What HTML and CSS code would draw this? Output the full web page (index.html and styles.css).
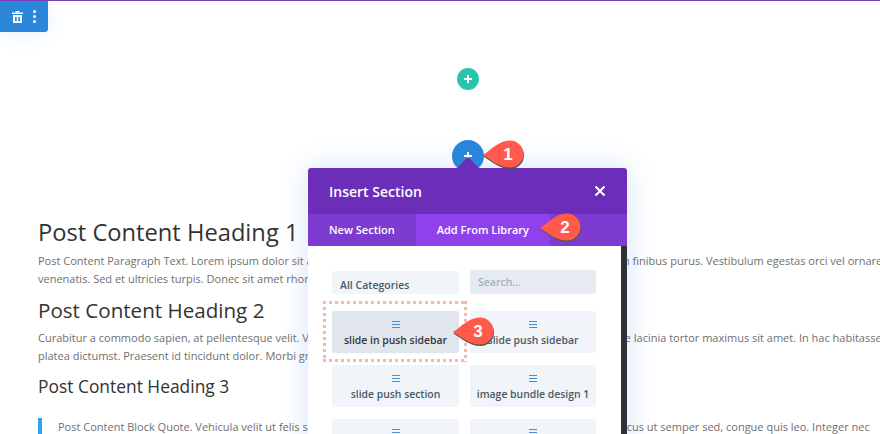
FILE: index.html
```html
<!DOCTYPE html>
<html lang="en">
<head>
    <meta charset="UTF-8">
    <meta name="viewport" content="width=device-width, initial-scale=1.0">
    <title>Insert Section</title>
    <link rel="stylesheet" href="styles.css">
</head>
<body>
    <div class="page">
        <div class="toolbar">
            <svg class="toolbar-icon" width="11" height="12" viewBox="0 0 11 12">
                <rect x="3.5" y="0" width="4" height="1.5" fill="#fff"/>
                <rect x="0" y="1.5" width="11" height="1.5" fill="#fff"/>
                <path d="M1 4h9v8H1z M3 6v4h1.75V6z M6.25 6v4H8V6z" fill="#fff" fill-rule="evenodd"/>
            </svg>
            <span class="kebab"><i></i><i></i><i></i></span>
        </div>

        <div class="add-row add-row-green">
            <span class="add-btn add-btn-green">
                <svg width="10" height="10" viewBox="0 0 10 10"><path d="M5 1v8M1 5h8" stroke="#fff" stroke-width="2"/></svg>
            </span>
        </div>
        <div class="add-row add-row-blue">
            <span class="add-btn add-btn-blue">
                <svg width="10" height="10" viewBox="0 0 10 10"><path d="M5 1v8M1 5h8" stroke="#fff" stroke-width="2"/></svg>
            </span>
        </div>

        <div class="content">
            <h1>Post Content Heading 1</h1>
            <p>Post Content Paragraph Text. Lorem ipsum dolor sit amet, consectetur adipiscing elit. Sed at nunc sed mauris quam finibus purus. Vestibulum egestas orci vel ornare<br>venenatis. Sed et ultricies turpis. Donec sit amet rhoncus erat.</p>
            <h2>Post Content Heading 2</h2>
            <p>Curabitur a commodo sapien, at pellentesque velit. Vivamus vitae lectus sed ipsum nec dapibus nulla sed eros, vitae lacinia tortor maximus sit amet. In hac habitasse<br>platea dictumst. Praesent id tincidunt dolor. Morbi gravida.</p>
            <h3>Post Content Heading 3</h3>
            <blockquote>Post Content Block Quote. Vehicula velit ut felis semper, pretium lacus nec ante rhoncus, vitae dictum ornare lacus ut semper sed, congue quis leo. Integer nec</blockquote>
        </div>

        <div class="modal">
            <span class="modal-arrow"></span>
            <div class="modal-head">
                <span class="modal-title">Insert Section</span>
                <svg width="12" height="12" viewBox="0 0 12 12"><path d="M1.5 1.5l9 9M10.5 1.5l-9 9" stroke="#fff" stroke-width="2"/></svg>
            </div>
            <div class="tabs">
                <span class="tab">New Section</span>
                <span class="tab tab-active">Add From Library</span>
            </div>
            <div class="modal-body">
                <div class="filters">
                    <div class="select">All Categories</div>
                    <div class="search">Search...</div>
                </div>
                <div class="layouts">
                    <div class="layout layout-selected"><span class="menu-icon"></span>slide in push sidebar</div>
                    <div class="layout"><span class="menu-icon"></span>slide push sidebar</div>
                    <div class="layout"><span class="menu-icon"></span>slide push section</div>
                    <div class="layout"><span class="menu-icon"></span>image bundle design 1</div>
                    <div class="layout"><span class="menu-icon"></span></div>
                    <div class="layout"><span class="menu-icon"></span></div>
                </div>
            </div>
        </div>

        <div class="dotted"></div>

        <div class="callout callout-1">
            <svg width="46" height="34" viewBox="0 0 46 34">
                <path d="M0 16C8 11 15 2 27 1.5A13.5 13.5 0 1 1 27 28.5C16 28.5 8 21 0 16z" fill="#5c5550" transform="translate(0.5 1.5)"/>
                <path d="M0 16C8 11 15 2 27 1.5A13.5 13.5 0 1 1 27 28.5C16 28.5 8 21 0 16z" fill="#ff5a4b"/>
            </svg>
            <span>1</span>
        </div>
        <div class="callout callout-2">
            <svg width="46" height="34" viewBox="0 0 46 34">
                <path d="M0 16C8 11 15 2 27 1.5A13.5 13.5 0 1 1 27 28.5C16 28.5 8 21 0 16z" fill="#5c5550" transform="translate(0.5 1.5)"/>
                <path d="M0 16C8 11 15 2 27 1.5A13.5 13.5 0 1 1 27 28.5C16 28.5 8 21 0 16z" fill="#ff5a4b"/>
            </svg>
            <span>2</span>
        </div>
        <div class="callout callout-3">
            <svg width="46" height="34" viewBox="0 0 46 34">
                <path d="M0 16C8 11 15 2 27 1.5A13.5 13.5 0 1 1 27 28.5C16 28.5 8 21 0 16z" fill="#5c5550" transform="translate(0.5 1.5)"/>
                <path d="M0 16C8 11 15 2 27 1.5A13.5 13.5 0 1 1 27 28.5C16 28.5 8 21 0 16z" fill="#ff5a4b"/>
            </svg>
            <span>3</span>
        </div>
    </div>
</body>
</html>
```

FILE: styles.css
```css
html, body {
    margin: 0;
    padding: 0;
}

body {
    font-family: "Open Sans", sans-serif;
    background-color: #fff;
    color: #6f6f6f;
}

.page {
    position: relative;
    width: 880px;
    height: 434px;
    overflow: hidden;
    border-top: 1px solid #7b3fb8;
    box-sizing: border-box;
}

.toolbar {
    display: flex;
    align-items: center;
    gap: 10px;
    width: 48px;
    height: 31px;
    padding-left: 12px;
    box-sizing: border-box;
    background-color: #2b87da;
    border-radius: 0 0 3px 0;
    box-shadow: 0 2px 18px rgba(43, 135, 218, 0.12);
}

.kebab {
    display: flex;
    flex-direction: column;
    gap: 2px;
}

.kebab i {
    display: block;
    width: 3px;
    height: 3px;
    border-radius: 50%;
    background-color: #fff;
}

.add-row {
    display: flex;
}

.add-row-green {
    margin: 36px 0 0 457px;
}

.add-row-blue {
    margin: 50px 0 0 452px;
}

.add-btn {
    display: flex;
    align-items: center;
    justify-content: center;
    border-radius: 50%;
}

.add-btn-green {
    width: 22px;
    height: 22px;
    background-color: #29c4a9;
}

.add-btn-blue {
    width: 32px;
    height: 32px;
    background-color: #2b87da;
}

.content {
    padding-left: 38px;
    margin-top: 45px;
    white-space: nowrap;
}

h1, h2, h3 {
    margin: 0;
    font-weight: 400;
    color: #333;
}

h1 {
    font-size: 23.7px;
    line-height: 30px;
    margin-bottom: 5px;
}

h2 {
    font-size: 20.6px;
    line-height: 26px;
    margin-top: 9px;
    margin-bottom: 6px;
}

h3 {
    font-size: 17.4px;
    line-height: 22px;
    margin-top: 10px;
}

p {
    margin: 0;
    font-size: 11px;
    line-height: 18px;
}

blockquote {
    margin: 21px 0 0;
    padding-left: 16px;
    font-size: 11px;
    line-height: 18px;
    border-left: 4px solid #2ea3f2;
}

.modal {
    position: absolute;
    left: 308px;
    top: 167px;
    width: 319px;
    height: 300px;
    background-color: #fff;
    border-radius: 3px 3px 0 0;
    box-shadow: 0 0 30px rgba(43, 120, 218, 0.2);
}

.modal-arrow {
    position: absolute;
    left: 149px;
    top: -11px;
    border-left: 11px solid transparent;
    border-right: 11px solid transparent;
    border-bottom: 11px solid #6c2eb9;
}

.modal-head {
    display: flex;
    align-items: center;
    justify-content: space-between;
    height: 46px;
    padding: 0 21px;
    background-color: #6c2eb9;
    border-radius: 3px 3px 0 0;
}

.modal-title {
    font-size: 14px;
    font-weight: 600;
    color: #fff;
}

.tabs {
    display: flex;
    height: 32px;
    background-color: #7d3bcf;
}

.tab {
    display: flex;
    align-items: center;
    padding: 0 21px 1px;
    font-size: 11px;
    font-weight: 600;
    color: #fff;
}

.tab-active {
    background-color: #8f42ec;
}

.modal-body {
    height: 222px;
    padding: 24px 31px 0 24px;
    box-sizing: border-box;
    border-right: 6px solid #2e3338;
}

.filters,
.layouts {
    display: grid;
    grid-template-columns: 127px 126px;
    column-gap: 11px;
}

.filters {
    align-items: end;
    margin-bottom: 17px;
}

.layouts {
    row-gap: 12px;
}

.select,
.search {
    padding: 0 8px;
    font-size: 10.5px;
    font-weight: 600;
    border-radius: 3px;
    box-sizing: border-box;
}

.select {
    height: 23px;
    line-height: 28px;
    color: #4c5866;
    background-color: #f1f5f9;
}

.search {
    height: 24px;
    color: #a3b0c2;
    line-height: 24px;
    background-color: #e6ebf2;
}

.layout {
    display: flex;
    flex-direction: column;
    align-items: center;
    gap: 5px;
    height: 42px;
    padding-top: 10px;
    box-sizing: border-box;
    font-size: 10.4px;
    font-weight: 600;
    line-height: 14px;
    color: #4c5866;
    background-color: #f1f5f9;
    border-radius: 3px;
}

.layout-selected {
    color: #32373c;
    background-color: #e1e6ec;
}

.menu-icon {
    display: block;
    width: 8px;
    height: 3px;
    border-top: 1px solid #3f93de;
    border-bottom: 1px solid #3f93de;
    padding: 1px 0;
    background: linear-gradient(#3f93de, #3f93de) center / 100% 1px no-repeat;
    background-clip: content-box;
    box-sizing: content-box;
}

.dotted {
    position: absolute;
    left: 323px;
    top: 300px;
    width: 144px;
    height: 61px;
    --dots-x: repeating-linear-gradient(90deg, #fbb4ae 0 3px, transparent 3px 6px);
    --dots-y: repeating-linear-gradient(180deg, #fbb4ae 0 3px, transparent 3px 6px);
    background-image: var(--dots-x), var(--dots-x), var(--dots-y), var(--dots-y);
    background-size: 100% 3px, 100% 3px, 3px 100%, 3px 100%;
    background-position: left top, left bottom, left top, right top;
    background-repeat: no-repeat;
}

.callout {
    position: absolute;
    width: 46px;
    height: 34px;
}

.callout svg {
    display: block;
}

.callout span {
    position: absolute;
    left: 12px;
    top: 0;
    width: 26px;
    font-family: "Liberation Sans", sans-serif;
    font-size: 17px;
    font-weight: 700;
    line-height: 31px;
    text-align: center;
    color: #fff;
}

.callout-1 {
    left: 483px;
    top: 138px;
}

.callout-2 {
    left: 540px;
    top: 211px;
}

.callout-3 {
    left: 453px;
    top: 315px;
}
```
